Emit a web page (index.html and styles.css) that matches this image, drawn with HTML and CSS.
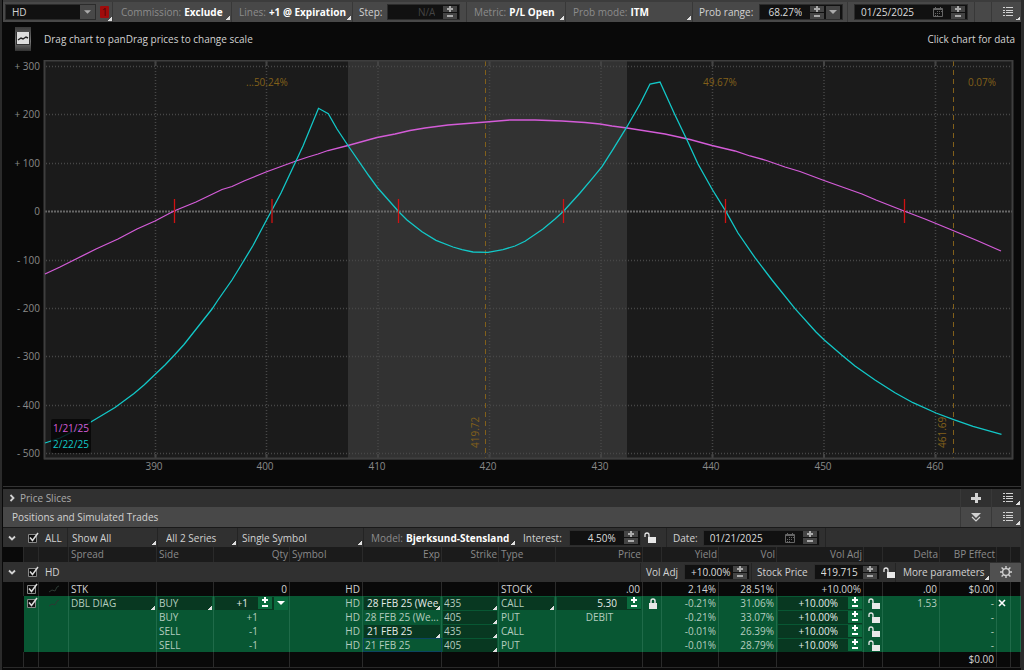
FILE: index.html
```
<!DOCTYPE html>
<html lang="en">
<head>
<meta charset="UTF-8">
<meta name="viewport" content="width=device-width, initial-scale=1.0">
<title>Risk Profile - HD</title>
<link rel="stylesheet" href="styles.css">
</head>
<body>

<!-- Shared icons -->
<svg class="sprite" aria-hidden="true">
  <symbol id="plus" viewBox="0 0 6 6"><path d="M2 0h2v2h2v2H4v2H2V4H0V2h2z"/></symbol>
  <symbol id="minus" viewBox="0 0 6 6"><path d="M0 2h6v2H0z"/></symbol>
  <symbol id="down" viewBox="0 0 8 8"><path d="M0 2h8L4 6z"/></symbol>
  <symbol id="chevron" viewBox="0 0 8 8"><path d="M1 2.5l3 3 3-3" fill="none" stroke="currentColor" stroke-width="1.8"/></symbol>
  <symbol id="chevron-right" viewBox="0 0 8 8"><path d="M2.5 1l3 3-3 3" fill="none" stroke="currentColor" stroke-width="1.8"/></symbol>
  <symbol id="list" viewBox="0 0 12 10"><path d="M0 0h2v1H0zM3 0h7v1H3zM0 3h2v1H0zM3 3h7v1H3zM0 5h2v1H0zM3 5h7v1H3zM0 8h2v1H0zM3 8h7v1H3z"/></symbol>
  <symbol id="calendar" viewBox="0 0 12 12"><path d="M1.5 2.5h9v8h-9zM3.5 1v2M8.5 1v2M1 3.5h10" fill="none" stroke="currentColor"/><path d="M5 5h1v1H5zM7 5h1v1H7zM3 7h1v1H3zM5 7h1v1H5zM7 7h1v1H7zM3 9h1v1H3zM5 9h1v1H5zM9 5h1v1H9z"/></symbol>
  <symbol id="unlock" viewBox="0 0 12 11"><path d="M4 5h8v6H4z"/><path d="M1 5V3q0-2 2-2t2 2v2" fill="none" stroke="currentColor" stroke-width="1.3"/></symbol>
  <symbol id="lock" viewBox="0 0 12 11"><path d="M2 5h8v6H2z"/><path d="M4 5V3q0-2 2-2t2 2v2" fill="none" stroke="currentColor" stroke-width="1.5"/></symbol>
  <symbol id="gear" viewBox="0 0 14 14"><circle cx="7" cy="7" r="3.4" fill="none" stroke="currentColor" stroke-width="1.4"/><path d="M7 1v3M7 10v3M1 7h3M10 7h3M2.6 2.6l2 2M9.4 9.4l2 2M2.6 11.4l2-2M9.4 4.6l2-2" stroke="currentColor" stroke-width="1.4"/></symbol>
  <symbol id="curve" viewBox="0 0 12 10"><path d="M1 8l3-2 3 1 2-4 2-1" fill="none" stroke="currentColor"/></symbol>
</svg>

<main class="window">

  <header class="toolbar">
    <div class="tool tool-symbol">
      <span class="field symbol">
        <select aria-label="Symbol"><option>HD</option></select>
        <svg class="arrow"><use href="#down"/></svg>
      </span>
      <button class="link-badge corner" aria-label="Link color"><span>1</span></button>
    </div>
    <button class="tool tool-commission corner"><span class="muted">Commission:</span> <b>Exclude</b></button>
    <button class="tool tool-lines corner"><span class="muted">Lines:</span> <b>+1 @ Expiration</b></button>
    <div class="tool tool-step">
      <label for="step">Step:</label>
      <span class="field disabled">
        <input id="step" class="num" value="N/A" disabled>
        <span class="spin"><button aria-label="Step up"><svg><use href="#plus"/></svg></button><button aria-label="Step down"><svg><use href="#minus"/></svg></button></span>
      </span>
    </div>
    <button class="tool tool-metric corner"><span class="muted">Metric:</span> <b>P/L Open</b></button>
    <button class="tool tool-mode corner"><span class="muted">Prob mode:</span> <b>ITM</b></button>
    <div class="tool tool-range">
      <label for="range">Prob range:</label>
      <span class="field">
        <input id="range" class="num" value="68.27%">
        <span class="spin"><button aria-label="Range up"><svg><use href="#plus"/></svg></button><button aria-label="Range down"><svg><use href="#minus"/></svg></button></span>
        <button class="drop" aria-label="Range presets"><svg><use href="#down"/></svg></button>
      </span>
    </div>
    <div class="tool tool-date">
      <span class="field">
        <input aria-label="Probability date" value="01/25/2025">
        <svg class="cal"><use href="#calendar"/></svg>
        <span class="spin"><button aria-label="Date up"><svg><use href="#plus"/></svg></button><button aria-label="Date down"><svg><use href="#minus"/></svg></button></span>
      </span>
    </div>
    <div class="tool tool-gap"></div>
    <button class="tool menu corner" aria-label="Chart menu"><svg class="list"><use href="#list"/></svg></button>
  </header>

  <section class="chart">
    <div class="chart-head">
      <button class="picture" aria-label="Chart settings">
        <svg viewBox="0 0 16 24"><rect x="1" y="5" width="14" height="13" fill="#333"/><rect x="2" y="5" width="12" height="12" fill="#ddd"/><path d="M3 13l3-2 2 1 3-2 2 1" fill="none" stroke="#222" stroke-width="1.5"/></svg>
      </button>
      <p>Drag chart to panDrag prices to change scale</p>
      <p class="hint">Click chart for data</p>
    </div>
    <svg class="plot" viewBox="3 60 1018 426" role="img" aria-label="HD profit and loss by price">
      <rect x="44" y="60" width="969" height="400" fill="#1b1b1b"/>
      <rect x="348" y="61" width="279" height="398" fill="#323232"/>
      <g class="grid">
        <path d="M46 66.5H1012M46 114.5H1012M46 163.5H1012M46 260.5H1012M46 308.5H1012M46 356.5H1012M46 405.5H1012M46 453.5H1012"/>
        <path d="M155.500 62V458M266.5 62V458M378 62V458M489.5 62V458M601 62V458M712.5 62V458M824 62V458M935.5 62V458"/>
      </g>
      <path class="zero" d="M45 211.5H1012"/>
      <path class="ticks" d="M155.5 61v5M266.5 61v5M378 61v5M489.5 61v5M601 61v5M712.5 61v5M824 61v5M935.5 61v5M155.5 454v5M266.5 454v5M378 454v5M489.5 454v5M601 454v5M712.5 454v5M824 454v5M935.5 454v5"/>
      <path class="prob-line" d="M485.5 61V459M953.5 61V459"/>
      <rect class="frame" x="44.5" y="60.5" width="968" height="398"/>

      <polyline class="today" points="45,274 60,267 74,260 96,249 118,239 137,229 155,221 174,211 196,202 222,189.5 232,186.5 244,181 266,172 296,161 308,157 318,154 328,150.5 348,145.5 377,137.5 395,134 410,130.5 425,128 448,125 486,122 510,120 535,120 562,121 585,122.5 600,124 612,126 627,128 665,134 690,139.5 712,145.5 735,151 750,156 765,160 785,167 800,171.5 824,180.5 862,194 876,200 904,211 925,219 936,223.5 953,230.5 977,240.5 1001,251"/>
      <polyline class="expiry" points="45,443 60,438 75,430.5 90,422.5 115,407.5 134,393.5 144,385 155,374.5 165,365 174,355.5 184,344.5 197,328 212,309 218,300 232,280 240,267 253,245.5 266,221 272,210 281,193 296,161 303,146 318.5,108.3 328.3,113.7 337,129 348,145.5 369,176 378,188.3 399,212 407,220 422,231.7 436,240.3 453,247 462,249.7 473,252 488,252.3 503,249.7 515,246 525,241.3 543,229 555,219 563.5,211.3 580,193 593,177.7 602,166.7 613,149.3 627,126.7 640,104 650,84 660,82 675,115 687,140 698,164 712,189 726,211.7 738,233 755,257.7 772,280 795,308.7 816,332 824,339.7 842,355.3 855,366 875,380 895,392.7 913,402.7 936,413 953,419.3 973,426.3 1001.5,434.3"/>
      <path class="breakeven" d="M174.5 199v24M272 199v24M398.5 199v24M563.5 199v24M725.5 199v24M904.5 199v24"/>

      <g class="axis" text-anchor="end">
        <text x="40" y="70">+ 300</text>
        <text x="40" y="118">+ 200</text>
        <text x="40" y="167">+ 100</text>
        <text x="40" y="215">0</text>
        <text x="40" y="264">- 100</text>
        <text x="40" y="312">- 200</text>
        <text x="40" y="360">- 300</text>
        <text x="40" y="409">- 400</text>
        <text x="40" y="457">- 500</text>
      </g>
      <g class="axis" text-anchor="middle">
        <text x="154" y="470">390</text>
        <text x="265" y="470">400</text>
        <text x="377" y="470">410</text>
        <text x="488" y="470">420</text>
        <text x="600" y="470">430</text>
        <text x="711" y="470">440</text>
        <text x="823" y="470">450</text>
        <text x="935" y="470">460</text>
      </g>
      <g class="prob">
        <text x="246" y="86">...50.24%</text>
        <text x="703" y="86">49.67%</text>
        <text x="968" y="86">0.07%</text>
        <text transform="translate(479 448) rotate(-90)">419.72</text>
        <text transform="translate(946 448) rotate(-90)">461.69</text>
      </g>
      <rect x="51" y="419" width="40" height="34" rx="2" fill="#050505" fill-opacity="0.8"/>
      <text class="today-label" x="53" y="432">1/21/25</text>
      <text class="expiry-label" x="53" y="448">2/22/25</text>
    </svg>
  </section>

  <section class="panel-head slices">
    <svg class="chev"><use href="#chevron-right"/></svg>
    <h2>Price Slices</h2>
    <button class="tool add" aria-label="Add slice"><svg viewBox="0 0 10 10"><path d="M4 0h3v4h3v3H7v3H4V7H0V4h4z"/></svg></button>
    <button class="tool menu corner" aria-label="Slices menu"><svg class="list"><use href="#list"/></svg></button>
  </section>

  <section class="panel-head positions">
    <h2>Positions and Simulated Trades</h2>
    <button class="tool add" aria-label="Collapse"><svg viewBox="0 0 10 10"><path d="M0 1h10L5 6z"/><path d="M1 5l4 4 4-4" fill="none" stroke="currentColor" stroke-width="1.2"/></svg></button>
    <button class="tool menu corner" aria-label="Positions menu"><svg class="list"><use href="#list"/></svg></button>
  </section>

  <div class="filters">
    <div class="lead">
      <svg class="chev"><use href="#chevron"/></svg>
      <input type="checkbox" id="all" checked>
      <label for="all">ALL</label>
    </div>
    <select class="tool pick-show corner" aria-label="Show"><option>Show All</option></select>
    <select class="tool pick-series corner" aria-label="Series"><option>All 2 Series</option></select>
    <select class="tool pick-symbol corner" aria-label="Symbols"><option>Single Symbol</option></select>
    <button class="tool pick-model corner"><span class="muted">Model:</span> <b>Bjerksund-Stensland</b></button>
    <div class="tool interest">
      <label for="interest">Interest:</label>
      <span class="field">
        <input id="interest" class="num" value="4.50%">
        <span class="spin"><button aria-label="Interest up"><svg><use href="#plus"/></svg></button><button aria-label="Interest down"><svg><use href="#minus"/></svg></button></span>
      </span>
      <svg class="lock"><use href="#unlock"/></svg>
    </div>
    <div class="tool date">
      <label for="date">Date:</label>
      <span class="field">
        <input id="date" value="01/21/2025">
        <svg class="cal"><use href="#calendar"/></svg>
        <span class="spin"><button aria-label="Date up"><svg><use href="#plus"/></svg></button><button aria-label="Date down"><svg><use href="#minus"/></svg></button></span>
      </span>
    </div>
    <div class="tool rest"></div>
  </div>

  <table class="trades">
    <colgroup>
      <col class="c-gutter"><col class="c-check"><col class="c-plot"><col class="c-spread"><col class="c-mid"><col class="c-qty"><col class="c-symbol"><col class="c-exp"><col class="c-mid"><col class="c-mid"><col class="c-wide"><col class="c-lock"><col class="c-mid"><col class="c-vol"><col class="c-wide"><col class="c-lock"><col class="c-mid"><col class="c-mid"><col class="c-close"><col class="c-end">
    </colgroup>
    <thead>
      <tr>
        <th class="gutter"></th><th></th><th></th><th>Spread</th><th>Side</th><th class="r">Qty</th><th>Symbol</th><th class="r">Exp</th><th class="r">Strike</th><th>Type</th><th class="r">Price</th><th></th><th class="r">Yield</th><th class="r">Vol</th><th class="r">Vol Adj</th><th></th><th class="r">Delta</th><th class="r">BP Effect</th><th></th><th></th>
      </tr>
    </thead>
    <tbody>
      <tr class="group">
        <td colspan="20">
          <div class="group-bar">
            <div class="lead">
              <svg class="chev"><use href="#chevron"/></svg>
              <input type="checkbox" id="hd" checked>
              <label for="hd">HD</label>
            </div>
            <div class="tool vol-adj">
              <label for="voladj">Vol Adj</label>
              <span class="field">
                <input id="voladj" value="+10.00%">
                <span class="spin"><button aria-label="Vol up"><svg><use href="#plus"/></svg></button><button aria-label="Vol down"><svg><use href="#minus"/></svg></button></span>
              </span>
            </div>
            <div class="tool stock-price">
              <label for="price">Stock Price</label>
              <span class="field">
                <input id="price" value="419.715">
                <span class="spin"><button aria-label="Price up"><svg><use href="#plus"/></svg></button><button aria-label="Price down"><svg><use href="#minus"/></svg></button></span>
              </span>
              <svg class="lock"><use href="#unlock"/></svg>
            </div>
            <button class="tool more corner">More parameters</button>
            <button class="gear" aria-label="Settings"><svg><use href="#gear"/></svg></button>
          </div>
        </td>
      </tr>
      <tr>
        <td class="gutter"></td>
        <td class="check"><input type="checkbox" aria-label="Include STK" checked></td>
        <td class="mini"><svg><use href="#curve"/></svg></td>
        <td>STK</td><td></td><td class="r">0</td><td class="r">HD</td><td></td><td></td><td>STOCK</td><td class="r">.00</td><td></td>
        <td class="r">2.14%</td><td class="r">28.51%</td><td class="r">+10.00%</td><td></td><td class="r">.00</td><td class="r">$0.00</td><td></td><td></td>
      </tr>
      <tr class="sim">
        <td class="gutter"></td>
        <td class="check"><input type="checkbox" aria-label="Include DBL DIAG" checked></td>
        <td class="mini"><svg><use href="#curve"/></svg></td>
        <td class="edit"><select class="corner" aria-label="Spread"><option>DBL DIAG</option></select></td>
        <td class="edit"><select class="corner" aria-label="Side"><option>BUY</option></select></td>
        <td class="edit">
          <div class="cell qty">
            <input class="num" aria-label="Quantity" value="+1">
            <span class="spin"><button aria-label="Quantity up"><svg><use href="#plus"/></svg></button><button aria-label="Quantity down"><svg><use href="#minus"/></svg></button></span>
            <button class="drop" aria-label="Quantity presets"><svg><use href="#down"/></svg></button>
          </div>
        </td>
        <td class="r">HD</td>
        <td class="edit bright"><select class="corner" aria-label="Expiration"><option>28 FEB 25 (Wee</option></select></td>
        <td class="edit"><select class="corner" aria-label="Strike"><option>435</option></select></td>
        <td class="edit"><select class="corner" aria-label="Type"><option>CALL</option></select></td>
        <td class="edit">
          <div class="cell">
            <input class="num" aria-label="Price" value="5.30">
            <span class="spin"><button aria-label="Price up"><svg><use href="#plus"/></svg></button><button aria-label="Price down"><svg><use href="#minus"/></svg></button></span>
          </div>
        </td>
        <td class="ico"><svg class="lock"><use href="#lock"/></svg></td>
        <td class="r">-0.21%</td><td class="r">31.06%</td>
        <td class="edit">
          <div class="cell">
            <input class="num" aria-label="Vol adj" value="+10.00%">
            <span class="spin"><button aria-label="Vol up"><svg><use href="#plus"/></svg></button><button aria-label="Vol down"><svg><use href="#minus"/></svg></button></span>
          </div>
        </td>
        <td class="ico"><svg class="lock"><use href="#unlock"/></svg></td>
        <td class="r">1.53</td><td class="r">-</td>
        <td class="ico"><button class="close" aria-label="Remove trade"><svg viewBox="0 0 8 8"><path d="M1 1l6 6M7 1L1 7" stroke="currentColor" stroke-width="1.6"/></svg></button></td>
        <td></td>
      </tr>
      <tr class="sim">
        <td class="gutter"></td><td></td><td></td><td></td>
        <td>BUY</td><td class="r leg">+1</td><td class="r">HD</td>
        <td>28 FEB 25 (We...</td>
        <td class="edit"><select class="corner" aria-label="Strike"><option>405</option></select></td>
        <td>PUT</td><td class="c">DEBIT</td><td></td>
        <td class="r">-0.21%</td><td class="r">33.07%</td>
        <td class="edit">
          <div class="cell">
            <input class="num" aria-label="Vol adj" value="+10.00%">
            <span class="spin"><button aria-label="Vol up"><svg><use href="#plus"/></svg></button><button aria-label="Vol down"><svg><use href="#minus"/></svg></button></span>
          </div>
        </td>
        <td class="ico"><svg class="lock"><use href="#unlock"/></svg></td>
        <td></td><td class="r">-</td><td></td><td></td>
      </tr>
      <tr class="sim">
        <td class="gutter"></td><td></td><td></td><td></td>
        <td>SELL</td><td class="r leg">-1</td><td class="r">HD</td>
        <td class="edit bright"><select class="corner" aria-label="Expiration"><option>21 FEB 25</option></select></td>
        <td class="edit"><select class="corner" aria-label="Strike"><option>435</option></select></td>
        <td>CALL</td><td></td><td></td>
        <td class="r">-0.01%</td><td class="r">26.39%</td>
        <td class="edit">
          <div class="cell">
            <input class="num" aria-label="Vol adj" value="+10.00%">
            <span class="spin"><button aria-label="Vol up"><svg><use href="#plus"/></svg></button><button aria-label="Vol down"><svg><use href="#minus"/></svg></button></span>
          </div>
        </td>
        <td class="ico"><svg class="lock"><use href="#unlock"/></svg></td>
        <td></td><td class="r">-</td><td></td><td></td>
      </tr>
      <tr class="sim">
        <td class="gutter"></td><td></td><td></td><td></td>
        <td>SELL</td><td class="r leg">-1</td><td class="r">HD</td>
        <td class="focus">21 FEB 25</td>
        <td class="edit"><select class="corner" aria-label="Strike"><option>405</option></select></td>
        <td>PUT</td><td></td><td></td>
        <td class="r">-0.01%</td><td class="r">28.79%</td>
        <td class="edit">
          <div class="cell">
            <input class="num" aria-label="Vol adj" value="+10.00%">
            <span class="spin"><button aria-label="Vol up"><svg><use href="#plus"/></svg></button><button aria-label="Vol down"><svg><use href="#minus"/></svg></button></span>
          </div>
        </td>
        <td class="ico"><svg class="lock"><use href="#unlock"/></svg></td>
        <td></td><td class="r">-</td><td></td><td></td>
      </tr>
      <tr class="total">
        <td class="gutter"></td><td></td><td></td><td></td><td></td><td></td><td></td><td></td><td></td><td></td><td></td><td></td><td></td><td></td><td></td><td></td><td></td><td class="r">$0.00</td><td></td><td></td>
      </tr>
    </tbody>
  </table>
</main>

</body>
</html>
```
FILE: styles.css
```
* {
  box-sizing: border-box;
}
body {
  margin: 0;
  background-color: #090909;
  color: #d2d2d2;
  font-family: "Open Sans", "Noto Sans", sans-serif;
  font-size: 10px;
  line-height: 14px;
}
h2, p {
  margin: 0;
  font-size: 10px;
  font-weight: normal;
}
input, select, button {
  margin: 0;
  padding: 0;
  border: 0;
  border-radius: 0;
  background-color: transparent;
  color: inherit;
  font: inherit;
  appearance: none;
  outline: none;
}
button, select {
  cursor: pointer;
}
svg {
  display: block;
  flex: none;
  fill: currentColor;
}
b {
  color: #fff;
}
.sprite {
  position: absolute;
  width: 0;
  height: 0;
}
.window {
  min-height: 100vh;
  padding-left: 1px;
  border-left: 2px solid #2b2b2b;
  border-right: 3px solid #2b2b2b;
}
.muted {
  color: #8c8c8c;
}

/* Little white corner that marks a drop-down */
.corner {
  background-image: linear-gradient(135deg, transparent 50%, #e0e0e0 50%);
  background-repeat: no-repeat;
  background-size: 4px 4px;
  background-position: right 1px bottom 2px;
}

/* Toolbars */
.toolbar {
  display: flex;
  height: 22px;
  border-top: 2px solid #3c3c3c;
  background-color: #484848;
}
.tool {
  display: flex;
  flex: none;
  align-items: center;
  gap: 3px;
  padding-left: 7px;
  border-left: 1px solid #383838;
  white-space: nowrap;
}
.tool-symbol {
  width: 109px;
  gap: 4px;
  padding-left: 2px;
  border-left: 0;
}
.tool-commission { width: 119px; padding-left: 8px; }
.tool-lines { width: 121px; }
.tool-step { width: 114px; padding-left: 6px; gap: 5px; }
.tool-metric { width: 99px; }
.tool-mode { flex: 1; }
.tool-range { width: 155px; padding-left: 6px; gap: 6px; }
.tool-date { width: 127px; padding-left: 6px; }
.tool-gap { width: 17px; }
.tool-step .field { width: 73px; }
.tool-range .field { width: 84px; }
.tool-date .field { width: 114px; }
.menu {
  width: 30px;
  padding-left: 11px;
}
.list {
  width: 12px;
  height: 10px;
}
.link-badge {
  display: flex;
  width: 12px;
  height: 18px;
  padding-top: 3px;
  background-position: right bottom;
}
.link-badge span {
  width: 9px;
  height: 12px;
  border-radius: 1px;
  background-color: #a00c0c;
  color: #4c0808;
  line-height: 12px;
}

/* Text boxes with steppers */
.field {
  display: flex;
  align-items: center;
  gap: 2px;
  height: 16px;
  padding-right: 2px;
  border: 1px solid #2c2c2c;
  background-color: #111;
}
.field input {
  flex: 1;
  min-width: 0;
  height: 14px;
  padding-left: 6px;
  color: #ddd;
}
.num {
  text-align: right;
}
.field .num {
  padding-right: 6px;
}
.disabled input {
  color: #444;
}
.symbol {
  width: 91px;
  padding-right: 0;
}
.symbol select {
  flex: 1;
  height: 14px;
  padding-left: 6px;
}
.arrow {
  width: 15px;
  height: 14px;
  padding: 3px 4px;
  background-color: #484848;
  color: #aaa;
}
.spin {
  display: flex;
  flex: none;
  flex-direction: column;
  gap: 1px;
  width: 14px;
}
.spin button {
  display: flex;
  align-items: center;
  justify-content: center;
  height: 6px;
  background-color: #444;
  color: #aaa;
}
.spin svg {
  width: 6px;
  height: 6px;
}
.drop {
  display: flex;
  flex: none;
  align-items: center;
  justify-content: center;
  width: 14px;
  height: 13px;
  background-color: #444;
  color: #aaa;
}
.drop svg {
  width: 8px;
  height: 8px;
}
.cal {
  width: 12px;
  height: 12px;
  margin-right: 5px;
  color: #666;
}
.lock {
  width: 12px;
  height: 11px;
  color: #e8e8e8;
}

/* Chart */
.chart {
  border-bottom: 1px solid #333;
}
.chart-head {
  display: flex;
  align-items: center;
  gap: 13px;
  height: 38px;
  padding: 0 6px 4px 12px;
}
.picture {
  width: 16px;
  height: 24px;
  background-image: linear-gradient(#3a3a3a, #777 60%, #333);
}
.picture svg {
  width: 16px;
  height: 24px;
}
.hint {
  margin-left: auto;
}
.plot {
  width: 100%;
  height: auto;
}
.grid {
  fill: none;
  stroke: #474747;
  stroke-width: 1.5;
  stroke-dasharray: 1 2;
}
.zero {
  stroke: #686868;
  stroke-width: 2;
  stroke-dasharray: 2 1;
}
.ticks {
  stroke: #444;
  stroke-width: 2;
}
.frame {
  fill: none;
  stroke: #3e3e3e;
  stroke-width: 2;
}
.prob-line {
  stroke: #82601a;
  stroke-dasharray: 5 4;
}
.today, .expiry {
  fill: none;
  stroke: #d45cd8;
  stroke-width: 1.3;
}
.expiry {
  stroke: #12c8c8;
}
.breakeven {
  stroke: #d01212;
  stroke-width: 1.3;
}
.axis {
  fill: #8a8a8a;
}
.prob {
  fill: #82601a;
}
.today-label {
  fill: #d45cd8;
}
.expiry-label {
  fill: #12c8c8;
}

/* Section headings */
.panel-head {
  display: flex;
  align-items: center;
  height: 20px;
  background-color: #484848;
}
.panel-head h2 {
  flex: 1;
}
.panel-head .tool {
  height: 100%;
}
.slices {
  height: 18px;
  margin-top: 2px;
  background-color: #303030;
}
.slices h2 {
  color: #aaa;
}
.positions h2 {
  padding-left: 9px;
}
.add {
  width: 31px;
  padding-left: 10px;
}
.add svg {
  width: 10px;
  height: 10px;
}
.chev {
  width: 8px;
  height: 8px;
  margin: 0 4px 0 5px;
}

/* Filters above the table */
.filters {
  display: flex;
  height: 20px;
  border-top: 1px solid #1a1a1a;
  background-color: #303030;
}
.filters .tool, .group-bar .tool {
  border-left-color: #242424;
}
.lead {
  display: flex;
  align-items: center;
  width: 64px;
}
.lead label {
  padding-left: 6px;
}
.lead input {
  margin-left: 7px;
}
[type="checkbox"] {
  flex: none;
  width: 12px;
  height: 12px;
  background: url("data:image/svg+xml,%3Csvg xmlns='http://www.w3.org/2000/svg' viewBox='0 0 12 12'%3E%3Cpath d='M1.5 2.5h8v8h-8z' fill='%23101010' stroke='%23888'/%3E%3Cpath d='M3 5.5l2.5 3L11 1' fill='none' stroke='%23ddd' stroke-width='1.5'/%3E%3C/svg%3E");
}
.pick-show { width: 90px; padding-left: 4px; }
.pick-series { width: 80px; padding-left: 8px; }
.pick-symbol { width: 126px; padding-left: 4px; }
.pick-model { width: 153px; }
.interest { width: 150px; padding-left: 7px; border-left: 0; }
.interest .field { width: 72px; margin: 0 0 0 4px; }
.date { width: 159px; padding-left: 6px; gap: 5px; }
.date .field { width: 117px; }
.rest { flex: 1; }

/* Positions table */
.trades {
  width: 100%;
  border-collapse: collapse;
  table-layout: fixed;
  border-bottom: 1px solid #2a2a2a;
}
.c-gutter { width: 21px; }
.c-check { width: 15px; }
.c-plot { width: 30px; }
.c-spread { width: 88px; }
.c-mid { width: 57px; }
.c-qty { width: 76px; }
.c-symbol { width: 73px; }
.c-exp { width: 79px; }
.c-wide { width: 87px; }
.c-lock { width: 19px; }
.c-vol { width: 58px; }
.c-close { width: 14px; }
.c-end { width: 10px; }
.trades th, .trades td {
  height: 14px;
  padding: 0 2px;
  overflow: hidden;
  box-shadow: inset -1px 0 #2a2a2a;
  line-height: 13px;
  text-align: left;
  white-space: nowrap;
}
.trades th {
  height: 15px;
  background-color: #1b1b1b;
  color: #8a8a8a;
  font-weight: normal;
}
.trades .gutter {
  background-color: #090909;
}
.trades .r {
  text-align: right;
}
.trades td.r {
  padding-right: 3px;
}
.trades .c {
  text-align: center;
}
.trades td.leg {
  padding-right: 32px;
}
.trades .group td {
  height: 20px;
  padding: 0;
  background-color: #303030;
}
.group-bar {
  display: flex;
  height: 19px;
}
.group-bar .lead {
  flex: 1;
}
.group-bar .vol-adj { width: 111px; padding-left: 5px; gap: 6px; }
.group-bar .stock-price { width: 144px; padding-left: 5px; gap: 6px; }
.vol-adj .field, .stock-price .field { width: 66px; }
.stock-price .lock { margin-left: -3px; }
.more { width: 95px; }
.gear {
  display: flex;
  align-items: center;
  justify-content: center;
  width: 31px;
  background-color: #505050;
}
.gear svg {
  width: 14px;
  height: 14px;
}
.mini svg {
  width: 12px;
  height: 10px;
  margin: 0 auto;
  color: #2c3a33;
}
.trades .check, .trades .ico {
  padding: 0 1px;
}
.check input, .ico svg {
  display: block;
  margin: 0 auto;
}
.trades .sim td {
  background-color: #085733;
  box-shadow: inset -1px 0 #1f6b49;
  color: #b4ccbf;
}
.trades .sim .gutter {
  background-color: #090909;
  box-shadow: none;
}
.trades .sim .edit {
  padding: 0 2px 0 1px;
}
.edit select {
  display: block;
  width: 100%;
  height: 13px;
  padding-left: 1px;
  background-color: #083821;
  background-position: right bottom;
}
.trades .sim .bright {
  color: #e4ece8;
}
.bright select {
  padding-left: 3px;
}
.cell {
  display: flex;
  align-items: center;
  gap: 2px;
  height: 13px;
  background-color: #083821;
}
.cell input {
  flex: 1;
  min-width: 0;
  height: 13px;
  padding-right: 8px;
  color: #e4ece8;
}
.cell .spin {
  gap: 0;
}
.cell .spin button, .cell .drop {
  background-color: #0a6b3d;
  color: #fff;
}
.trades .sim .focus {
  outline: 1px solid #0b4560;
  outline-offset: -1px;
}
.close {
  display: block;
}
.close svg {
  width: 8px;
  height: 8px;
  color: #fff;
}
.trades .total td {
  height: 15px;
}
```
